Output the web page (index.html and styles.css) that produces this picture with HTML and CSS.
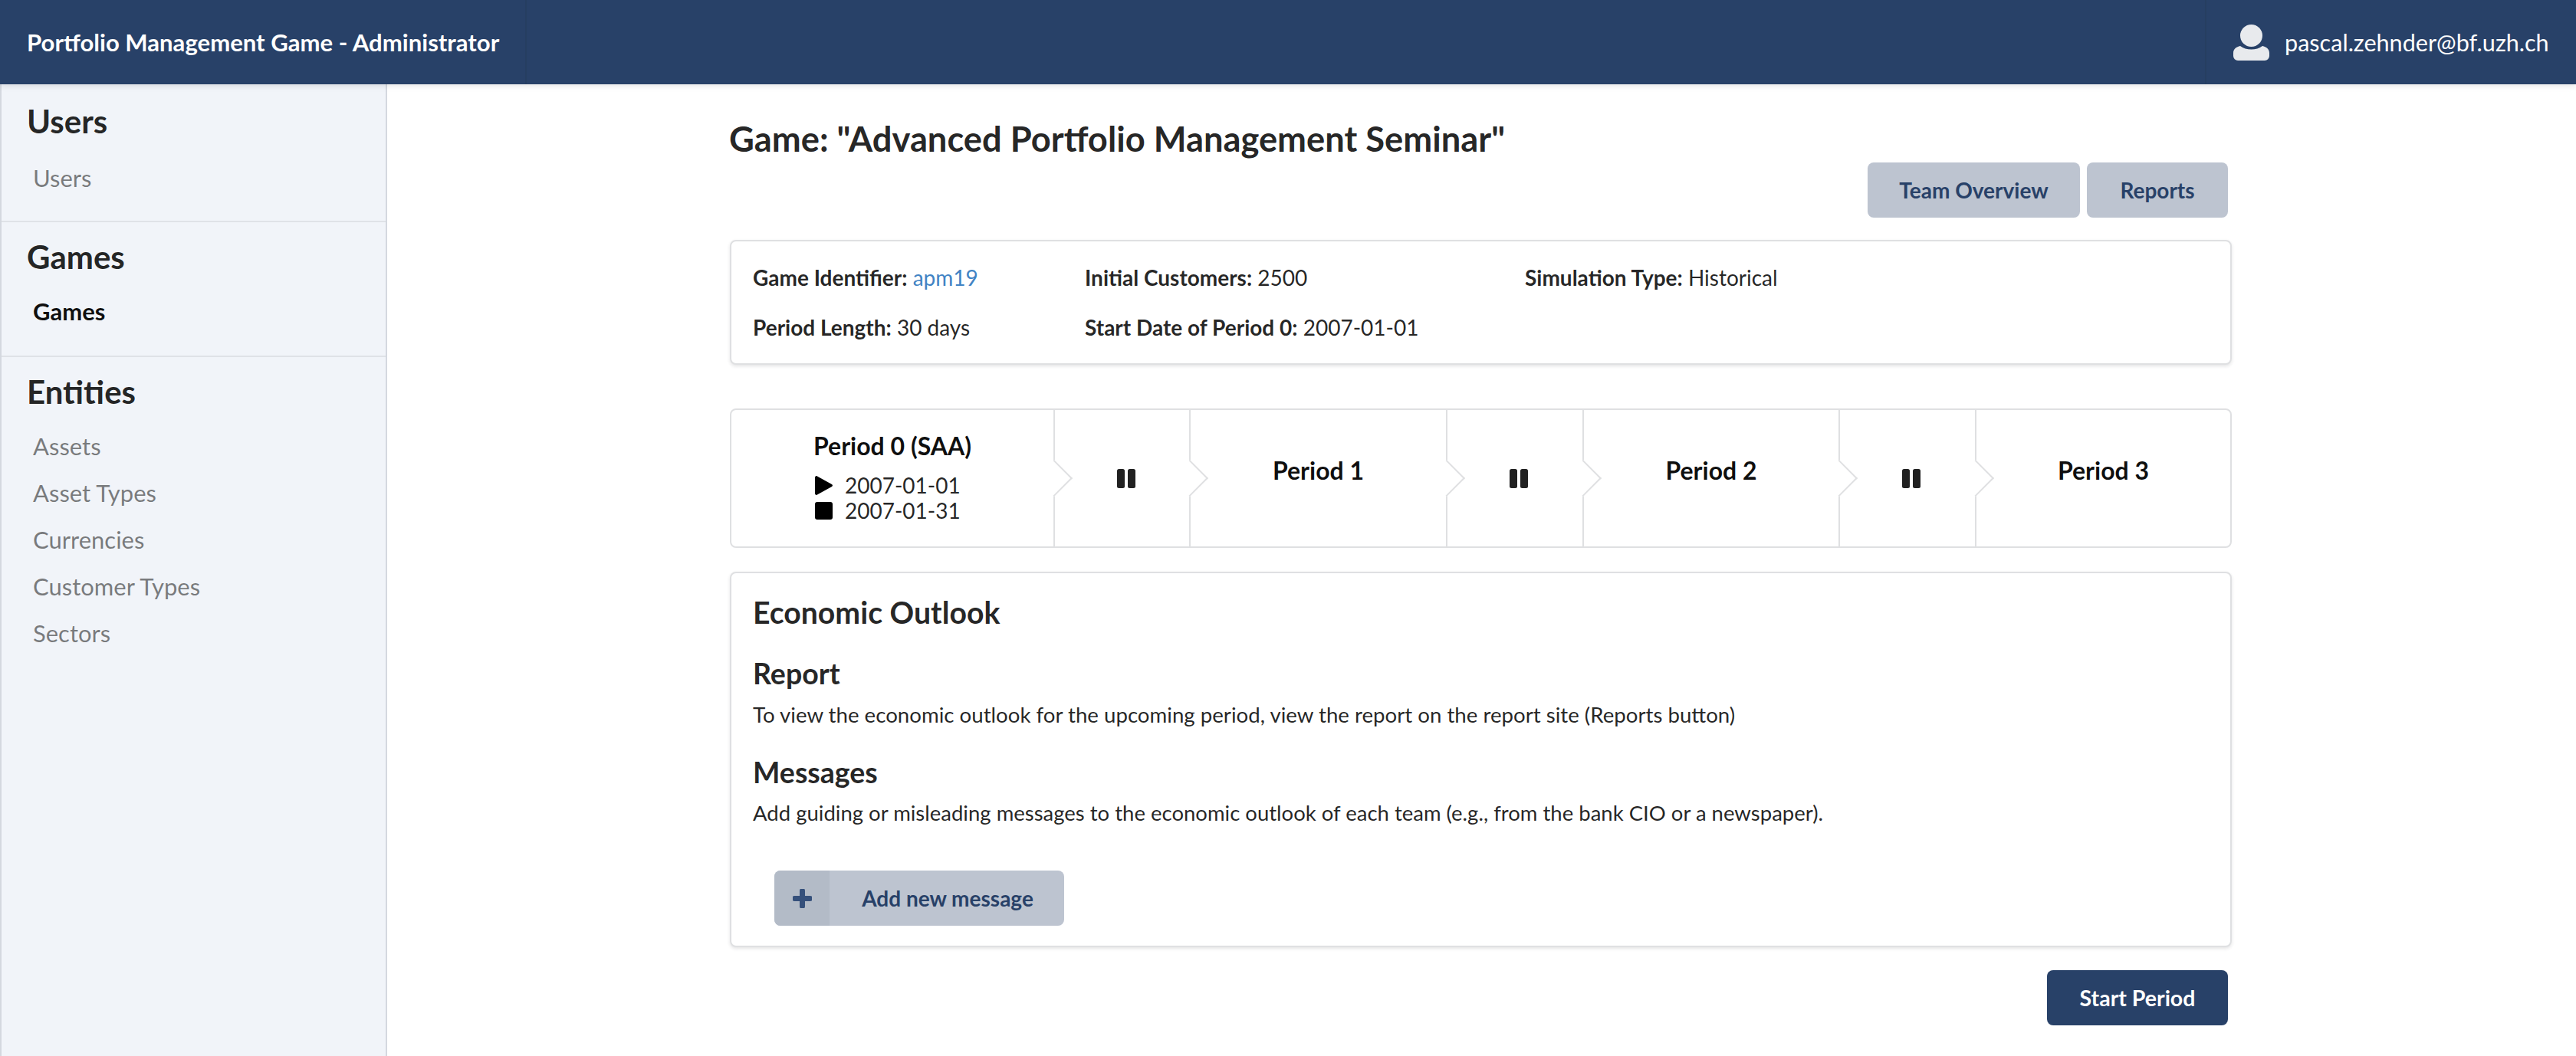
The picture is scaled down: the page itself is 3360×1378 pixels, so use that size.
FILE: index.html
```html
<!DOCTYPE html>
<html lang="en">
<head>
<meta charset="utf-8">
<title>Portfolio Management Game - Administrator</title>
<link rel="stylesheet" href="styles.css">
</head>
<body>
<header class="topbar">
  <div class="brand">Portfolio Management Game - Administrator</div>
  <div class="user">
    <svg class="user-icon" viewBox="0 0 47 47" aria-hidden="true"><circle cx="23.5" cy="14.5" r="14.5"/><path d="M6 47a6 6 0 0 1-6-6v-4c0-5 4-8 9-9 4 3 9 4.500 14.500 4.500S34 31 38 28c5 1 9 4 9 9v4a6 6 0 0 1-6 6z"/></svg>
    <span>pascal.zehnder@bf.uzh.ch</span>
  </div>
</header>
<div class="layout">
  <nav class="sidebar">
    <section class="nav-group">
      <h3 class="nav-title">Users</h3>
      <a class="nav-item">Users</a>
    </section>
    <section class="nav-group">
      <h3 class="nav-title">Games</h3>
      <a class="nav-item active">Games</a>
    </section>
    <section class="nav-group">
      <h3 class="nav-title">Entities</h3>
      <a class="nav-item">Assets</a>
      <a class="nav-item">Asset Types</a>
      <a class="nav-item">Currencies</a>
      <a class="nav-item">Customer Types</a>
      <a class="nav-item">Sectors</a>
    </section>
  </nav>
  <main class="main">
    <div class="content">
      <h1 class="page-title">Game: "Advanced Portfolio Management Seminar"</h1>
      <div class="actions">
        <button class="btn btn-light btn-team">Team Overview</button>
        <button class="btn btn-light btn-reports">Reports</button>
      </div>
      <section class="card info">
        <div class="info-cell"><b>Game Identifier:</b> <a class="link">apm19</a></div>
        <div class="info-cell"><b>Initial Customers:</b> 2500</div>
        <div class="info-cell"><b>Simulation Type:</b> Historical</div>
        <div class="info-cell"><b>Period Length:</b> 30 days</div>
        <div class="info-cell"><b>Start Date of Period 0:</b> 2007-01-01</div>
      </section>
      <section class="steps">
        <div class="step step-first">
          <div class="step-title">Period 0 (SAA)</div>
          <div class="step-date">
            <svg class="mini-icon" viewBox="0 0 23 25" aria-hidden="true"><path d="M0 2.500C0 .5 1.500-.5 3 .5l19 10.500c1.300.8 1.300 2.200 0 3L3 24.500C1.500 25.500 0 24.500 0 22.500z"/></svg>
            <span>2007-01-01</span>
          </div>
          <div class="step-date">
            <svg class="mini-icon" viewBox="0 0 23 23" aria-hidden="true"><rect width="23" height="23" rx="3"/></svg>
            <span>2007-01-31</span>
          </div>
        </div>
        <div class="step step-pause"><svg class="pause" viewBox="0 0 24 25" aria-hidden="true"><rect width="10" height="25" rx="2.500"/><rect x="14" width="10" height="25" rx="2.500"/></svg></div>
        <div class="step"><div class="step-title">Period 1</div></div>
        <div class="step step-pause"><svg class="pause" viewBox="0 0 24 25" aria-hidden="true"><rect width="10" height="25" rx="2.500"/><rect x="14" width="10" height="25" rx="2.500"/></svg></div>
        <div class="step"><div class="step-title">Period 2</div></div>
        <div class="step step-pause"><svg class="pause" viewBox="0 0 24 25" aria-hidden="true"><rect width="10" height="25" rx="2.500"/><rect x="14" width="10" height="25" rx="2.500"/></svg></div>
        <div class="step step-last"><div class="step-title">Period 3</div></div>
      </section>
      <section class="card outlook">
        <h2 class="outlook-title">Economic Outlook</h2>
        <h3 class="sub-title">Report</h3>
        <p class="copy">To view the economic outlook for the upcoming period, view the report on the report site (Reports button)</p>
        <h3 class="sub-title sub-title-2">Messages</h3>
        <p class="copy copy-2">Add guiding or misleading messages to the economic outlook of each team (e.g., from the bank CIO or a newspaper).</p>
        <button class="btn-add">
          <span class="btn-add-icon"><svg viewBox="0 0 25 25" aria-hidden="true"><path d="M9 2.500a2.500 2.500 0 0 1 7 0V9h6.500a3.500 3.500 0 0 1 0 7H16v6.500a3.500 3.500 0 0 1-7 0V16H2.500a3.500 3.500 0 0 1 0-7H9z"/></svg></span>
          <span class="btn-add-label">Add new message</span>
        </button>
      </section>
      <div class="footer-actions">
        <button class="btn btn-primary">Start Period</button>
      </div>
    </div>
  </main>
</div>
</body>
</html>
```
FILE: styles.css
```css
* { box-sizing: border-box; }
html, body { height: 100%; }
body {
  margin: 0;
  height: 1378px;
  overflow: hidden;
  font-family: Lato, "Open Sans", sans-serif;
  font-size: 28px;
  color: rgba(0, 0, 0, 0.87);
  background: #fff;
  display: flex;
  flex-direction: column;
}
.topbar {
  height: 110px;
  flex: none;
  background: #284168;
  color: #fff;
  display: flex;
  justify-content: space-between;
  align-items: stretch;
  box-shadow: 0 2px 8px rgba(34, 36, 38, 0.12);
  position: relative;
  z-index: 1;
}
.brand {
  width: 687px;
  padding-left: 35px;
  display: flex;
  align-items: center;
  font-size: 31.1px;
  font-weight: 700;
  border-right: 2px solid rgba(34, 36, 38, 0.1);
}
.user {
  width: 484px;
  padding-left: 35px;
  display: flex;
  align-items: center;
  gap: 20px;
  font-size: 30.6px;
  border-left: 2px solid rgba(34, 36, 38, 0.1);
}
.user-icon { width: 47px; height: 47px; fill: #e8eaed; flex: none; }

.layout { flex: 1; display: flex; min-height: 0; }
.sidebar {
  width: 505px;
  flex: none;
  background: #f1f4f9;
  border-left: 2px solid #d4d8df;
  border-right: 2px solid #d4d8df;
}
.nav-group {
  height: 176px;
  padding: 23px 0 0 33px;
  border-bottom: 2px solid #dfe2e7;
  display: flex;
  flex-direction: column;
}
.nav-group:first-child { height: 180px; padding-top: 26px; }
.nav-group:first-child .nav-title { margin-bottom: 30px; }
.nav-group:last-child { border-bottom: 0; height: auto; }
.nav-title { margin: 0 0 27px; font-size: 42px; font-weight: 700; line-height: 44px; }
.nav-item {
  margin-left: 8px;
  height: 61px;
  line-height: 44px;
  font-size: 31px;
  color: rgba(0, 0, 0, 0.5);
}
.nav-item.active { color: rgba(0, 0, 0, 0.95); font-weight: 700; }

.main { flex: 1; min-width: 0; }
.content { width: 1959px; margin-left: 447px; }
.page-title { margin: 47px 0 0 -1px; font-size: 45.3px; line-height: 48px; font-weight: 700; }
.actions { display: flex; justify-content: flex-end; gap: 9px; padding-right: 5px; margin-top: 7px; }
.btn {
  height: 72px;
  border: 0;
  border-radius: 8px;
  font-family: inherit;
  font-size: 28px;
  font-weight: 700;
  padding: 0;
}
.btn-light { background: #bdc4d0; color: #284168; }
.btn-team { width: 277px; }
.btn-reports { width: 184px; }
.btn-primary { background: #284168; color: #fff; width: 236px; font-size: 28.5px; }

.card {
  background: #fff;
  border: 2px solid #dfe0e2;
  border-radius: 8px;
  box-shadow: 0 2px 4px rgba(34, 36, 38, 0.12);
}
.info {
  margin-top: 29px;
  height: 163px;
  padding: 27px 28px;
  display: grid;
  grid-template-columns: 433px 574px 1fr;
  grid-auto-rows: 65px;
  font-size: 28px;
}
.info b { font-weight: 700; }
.info-cell { line-height: 40px; }
.link { color: #4183c4; }

.steps {
  margin-top: 57px;
  height: 182px;
  display: grid;
  grid-template-columns: 422px 177px 335px 178px 334px 178px 1fr;
  grid-template-rows: 1fr;
  border: 2px solid #dfe0e2;
  border-radius: 8px;
}
.step {
  position: relative;
  min-height: 0;
  border-right: 2px solid #dfe0e2;
  display: flex;
  flex-direction: column;
  align-items: center;
  justify-content: center;
  padding-bottom: 20px;
}
.step::after {
  content: "";
  position: absolute;
  top: 50%;
  right: -1px;
  width: 32px;
  height: 32px;
  background: #fff;
  border: solid #dfe0e2;
  border-width: 2px 2px 0 0;
  transform: translate(50%, -50%) rotate(45deg);
  z-index: 1;
}
.step-last { border-right: 0; }
.step-last::after { display: none; }
.step-first { padding-bottom: 5px; }
.step-pause { padding: 0 0 0 10px; }
.step-title { font-size: 32px; font-weight: 700; color: rgba(0, 0, 0, 0.95); line-height: 44px; }
.step-first .step-title { margin-bottom: 13px; }
.step-date {
  display: flex;
  align-items: center;
  gap: 16px;
  font-size: 28px;
  line-height: 33px;
  width: 180px;
  margin-right: 22px;
  white-space: nowrap;
}
.mini-icon { width: 23px; height: 25px; fill: #000; flex: none; }
.pause { width: 24px; height: 25px; fill: rgba(0, 0, 0, 0.87); }

.outlook {
  margin-top: 31px;
  height: 490px;
  padding: 25px 28px 0;
}
.outlook-title { margin: 0; font-size: 39.2px; line-height: 52px; font-weight: 700; }
.sub-title { margin: 30px 0 0; font-size: 37.5px; line-height: 48px; font-weight: 700; }
.sub-title-2 { margin-top: 31px; }
.copy { margin: 10px 0 0; font-size: 27.65px; line-height: 40px; }
.copy-2 { margin-top: 9px; font-size: 27.5px; }
.btn-add {
  margin: 55px 0 0 28px;
  width: 378px;
  height: 72px;
  padding: 0;
  border: 0;
  border-radius: 8px;
  background: #bdc4d0;
  color: #284168;
  font-family: inherit;
  font-size: 28px;
  font-weight: 700;
  display: flex;
  align-items: stretch;
  overflow: hidden;
}
.btn-add-icon {
  width: 72px;
  flex: none;
  background: #b3bbc7;
  display: flex;
  align-items: center;
  justify-content: center;
}
.btn-add-icon svg { width: 25px; height: 25px; fill: #35507b; }
.btn-add-label { flex: 1; display: flex; align-items: center; justify-content: center; padding-left: 2px; }
.footer-actions { display: flex; justify-content: flex-end; padding-right: 5px; margin-top: 30px; }
```
